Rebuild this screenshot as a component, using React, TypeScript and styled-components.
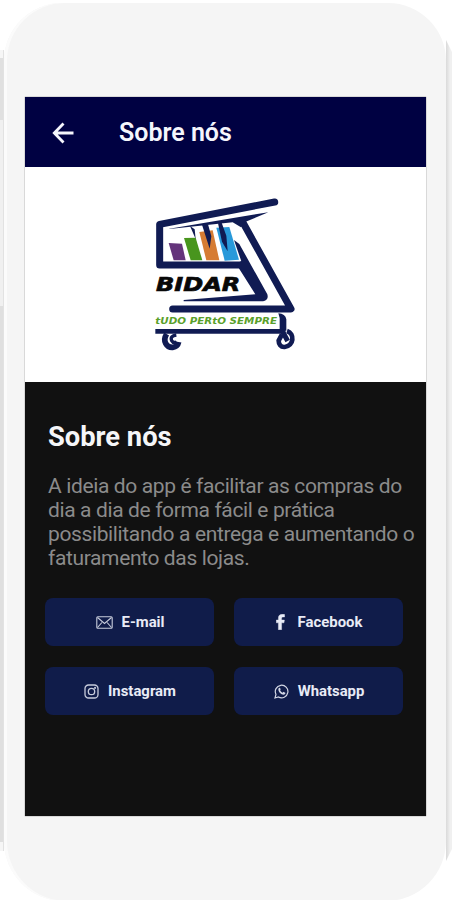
import React from 'react';
import styled, { createGlobalStyle } from 'styled-components';

const GlobalStyle = createGlobalStyle`
  * { box-sizing: border-box; }
  html, body { margin: 0; background: #fff; }
  body { font-family: Roboto, sans-serif; overflow: hidden; }
`;

const Stage = styled.div`
  width: 452px;
  height: 900px;
  display: grid;
  grid-template-columns: 4px 442px 6px;
  background: #fff;
  overflow: hidden;
`;

const LeftEdge = styled.div`
  margin: 50px 0 50px;
  background: linear-gradient(90deg, transparent 3px, #e2e2e2 3px),
    linear-gradient(180deg, #f6f6f6 8px, #e0e0e0 8px, #e0e0e0 70px, #f0f0f0 70px, #f0f0f0 256px, #dfdfdf 256px, #dfdfdf 792px, #f6f6f6 792px);
`;

const RightEdge = styled.div`
  margin: 40px 0 39px;
  background: linear-gradient(90deg, #dadada, #e4e4e4 2px, #f0f0f0 4px, #f0f0f0);
  clip-path: polygon(0 0, 6px 12px, 6px 809px, 0 821px);
`;

const Phone = styled.main`
  height: 898px;
  margin-top: 3px;
  padding: 94px 20px 0 21px;
  border-radius: 58px 58px 60px 60px;
  background: #f5f5f5;
  box-shadow: inset 3px 0 0 #fbfbfb;
`;

const Screen = styled.section`
  width: 401px;
  height: 719px;
  display: flex;
  flex-direction: column;
  background: #111;
  box-shadow: 0 0 1px #555;
`;

const Header = styled.header`
  flex: 0 0 70px;
  display: flex;
  align-items: center;
  padding: 1px 0 0 27px;
  background: #000142;
  color: #f5f6fc;
`;

const BackButton = styled.button`
  display: flex;
  width: 22px;
  padding: 0;
  border: 0;
  background: none;
  color: inherit;
`;

const HeaderTitle = styled.h1`
  margin: 1px 0 0 45px;
  font-size: 25px;
  line-height: 30px;
  font-weight: 600;
`;

const LogoPanel = styled.div`
  flex: 0 0 215px;
  padding: 18px 0 0 115px;
  background: #fff;
`;

const Content = styled.div`
  padding: 39px 0 0 23px;
`;

const Title = styled.h2`
  margin: 0;
  font-size: 27.3px;
  line-height: 32px;
  font-weight: 700;
  color: #f5f6f8;
`;

const Description = styled.p`
  margin: 21px 0 0;
  font-size: 21px;
  letter-spacing: -0.37px;
  line-height: 24px;
  color: #8b8b8b;
  white-space: nowrap;
`;

const Links = styled.div`
  display: grid;
  grid-template-columns: 169px 169px;
  grid-auto-rows: 48px;
  gap: 21px 20px;
  margin: 28px 0 0 -3px;
`;

const LinkButton = styled.button<{ $gap: number }>`
  display: flex;
  align-items: center;
  justify-content: center;
  gap: ${({ $gap }) => $gap}px;
  padding: 0 0 0 1px;
  border: 0;
  border-radius: 8px;
  background: #101c4a;
  color: #e8ebf6;
  font: 700 14.9px Roboto, sans-serif;
`;

const Glyph = styled.svg`
  display: block;
  flex: none;
  fill: none;
  stroke: currentColor;
`;

const BackIcon = () => (
  <Glyph width="22" height="22" viewBox="0 0 22 22" strokeWidth="2.8">
    <path d="M11.5 1.500 2.300 11l9.200 9.500M2.500 11H21.500" />
  </Glyph>
);

const MailIcon = () => (
  <Glyph width="17" height="13" viewBox="0 0 17 13" strokeWidth="1.1" opacity=".85">
    <rect x=".8" y=".8" width="15.4" height="11.4" rx="1" />
    <path d="m1.5 1.5 7 6 7-6M1.5 11.5l4.4-5M15.5 11.5l-4.400-5" />
  </Glyph>
);

const FacebookIcon = () => (
  <Glyph width="9" height="16" viewBox="0 0 9 16">
    <path fill="currentColor" stroke="currentColor" strokeWidth=".4" d="M2.4 15.700V8.800H.3V6h2.100V4.100C2.400 1.500 3.900.300 6.300.300c1 0 1.800.100 2.300.200V3H7.100c-1.200 0-1.500.600-1.500 1.500V6h2.800L8 8.800H5.600v6.900z" />
  </Glyph>
);

const InstagramIcon = () => (
  <Glyph width="15" height="15" viewBox="0 0 15 15" strokeWidth="1.3" opacity=".85">
    <rect x="1" y="1" width="13" height="13" rx="3.6" />
    <circle cx="7.5" cy="7.5" r="3.2" />
    <circle cx="11.1" cy="3.9" r=".4" />
  </Glyph>
);

const WhatsappIcon = () => (
  <Glyph width="15" height="15" viewBox="0 0 15 15" strokeWidth="1.2" opacity=".9">
    <path d="m1 14 1-3.600A6.300 6.300 0 1 1 4.500 13z" />
    <path fill="currentColor" stroke="none" d="M5.200 3.800c.500-.300.800 0 1 .500l.400 1c.100.400-.200.700-.500 1 .600 1.200 1.400 1.900 2.600 2.400.400-.500.700-1 1.100-.800l1.500.800c.300.200-.100 1.200-.500 1.600-1.300 1.100-3.300.100-4.700-1.200C4.600 7.500 3.600 5 5.200 3.800z" />
  </Glyph>
);

const CartLogo = () => (
  <svg width="170" height="175" viewBox="0 0 510 525" role="img" aria-label="Bidar">
    <g fill="none" stroke="#101b53" strokeLinecap="round" strokeLinejoin="round">
      <path strokeWidth="21" d="m404 51-345 67v122h245" />
      <path strokeWidth="21" d="m308 111 145 261H98" />
      <path strokeWidth="19" d="m304 239 67 97" />
    </g>
    <path fill="#64347b" d="m86 174 40 2 11 50h-36z" />
    <path fill="#48951d" d="m132 159 35-1 20 68h-35z" />
    <path fill="#d67c33" d="m178 141 40-5 20 90h-39z" />
    <path fill="#2899da" d="m229 128 39-2 29 98-43 3z" />
    <g fill="#101b53">
      <path d="m88 131 250-42 47-7-68 28-14 17-25-15-190 20z" />
      <path d="m282 165 16 12 84 151c4 13-3 21-17 21H131v-4l215-17-56-89 14-10z" />
      <path d="m150 123 17 39-3-29zM186 119l23 72 5-37-10-36zM234 115l12 55 17 29-4-47-14-39z" />
      <path d="M415 385q21 1 24 18v34h-20v-38z" />
      <path d="M46 432h390v14H46z" />
    </g>
    <g fill="none" stroke="#101b53">
      <path strokeWidth="17" d="M80 447c-14 22 1 41 18 40 9-1 16-7 18-16" />
      <path strokeWidth="10" d="M109 450q-20 3-14 17 5 9 15 4" />
      <path strokeWidth="14" d="M441 438c24 8 21 45-7 48-12 1-18-8-18-19l10-19" />
      <path strokeWidth="15" d="m426 436 17 32" />
    </g>
    <text x="48" y="319" textLength="253" lengthAdjust="spacingAndGlyphs" fill="#080808" stroke="#080808" strokeWidth="2" fontFamily="DejaVu Sans" fontSize="58" fontWeight="700" fontStyle="italic">BIDAR</text>
    <text x="46" y="418" textLength="365" lengthAdjust="spacingAndGlyphs" fill="#5aa02b" fontFamily="DejaVu Sans" fontSize="27" fontWeight="700" fontStyle="italic">tUDO PERtO SEMPRE</text>
  </svg>
);

export default function App() {
  return (
    <>
      <GlobalStyle />
      <Stage>
        <LeftEdge />
        <Phone>
          <Screen>
            <Header>
              <BackButton aria-label="Voltar"><BackIcon /></BackButton>
              <HeaderTitle>Sobre nós</HeaderTitle>
            </Header>
            <LogoPanel><CartLogo /></LogoPanel>
            <Content>
              <Title>Sobre nós</Title>
              <Description>
                A ideia do app é facilitar as compras do<br />
                dia a dia de forma fácil e prática<br />
                possibilitando a entrega e aumentando o<br />
                faturamento das lojas.
              </Description>
              <Links>
                <LinkButton $gap={9}><MailIcon />E-mail</LinkButton>
                <LinkButton $gap={13}><FacebookIcon />Facebook</LinkButton>
                <LinkButton $gap={9}><InstagramIcon />Instagram</LinkButton>
                <LinkButton $gap={9}><WhatsappIcon />Whatsapp</LinkButton>
              </Links>
            </Content>
          </Screen>
        </Phone>
        <RightEdge />
      </Stage>
    </>
  );
}
